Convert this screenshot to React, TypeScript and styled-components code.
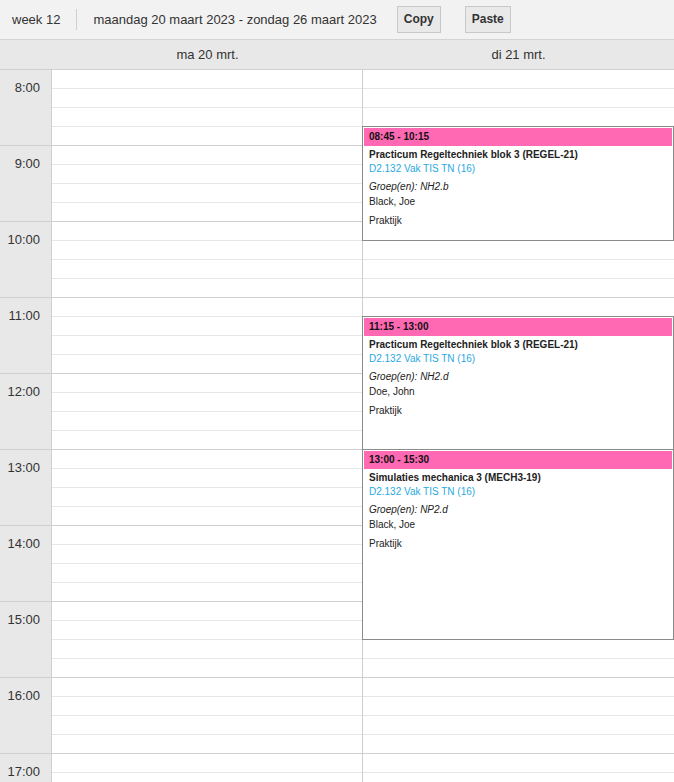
import React from "react";
import styled, { createGlobalStyle } from "styled-components";

const GlobalStyle = createGlobalStyle`
  html, body { margin: 0; padding: 0; background: #fff; }
  body { font-family: "Liberation Sans", Arial, sans-serif; color: #333; }
  * { box-sizing: border-box; }
`;

const HOUR = 76;
const QUARTER = 19;
const START = 8;

const Page = styled.div`
  width: 674px;
  height: 782px;
  overflow: hidden;
  display: flex;
  flex-direction: column;
`;

const Toolbar = styled.div`
  height: 40px;
  flex: none;
  display: flex;
  align-items: center;
  background: #f2f2f2;
  border-bottom: 1px solid #d4d4d4;
  padding: 0 0 1px 12px;
  font-size: 13px;
  color: #333;
`;

const Separator = styled.div`
  width: 1px;
  height: 21px;
  background: #cfcfcf;
  margin: 0 16px 0 16px;
`;

const ToolButton = styled.button<{ $gap: number }>`
  height: 27px;
  margin-left: ${(p) => p.$gap}px;
  padding: 0 6px;
  background: #e9e9e9;
  border: 1px solid #c8c8c8;
  border-radius: 0;
  font-family: "Liberation Sans", Arial, sans-serif;
  font-size: 12px;
  font-weight: bold;
  color: #333;
`;

const HeaderRow = styled.div`
  height: 30px;
  flex: none;
  display: grid;
  grid-template-columns: 52px 311px 311px;
  background: #e8e8e8;
  border-bottom: 1px solid #d0d0d0;
`;

const DayTitle = styled.div`
  display: flex;
  align-items: center;
  justify-content: center;
  font-size: 13px;
  color: #333;
  padding-bottom: 1px;
`;

const Grid = styled.div`
  display: grid;
  grid-template-columns: 52px 311px 311px;
  flex: none;
`;

const TimeColumn = styled.div`
  background: #e8e8e8;
  border-right: 1px solid #cfcfcf;
`;

const TimeCell = styled.div`
  height: ${HOUR}px;
  border-bottom: 1px solid #cfcfcf;
  text-align: right;
  padding: 10px 11px 0 0;
  font-size: 13px;
  line-height: 15px;
  color: #333;
`;

const DayColumn = styled.div<{ $last?: boolean }>`
  position: relative;
  border-right: ${(p) => (p.$last ? "none" : "1px solid #cfcfcf")};
`;

const Slot = styled.div<{ $hourEnd: boolean }>`
  height: ${QUARTER}px;
  border-bottom: 1px solid ${(p) => (p.$hourEnd ? "#cfcfcf" : "#e6e6e6")};
`;

const Event = styled.div`
  position: absolute;
  left: -1px;
  right: 0;
  background: #fff;
  border: 1px solid #8a8a8a;
  padding: 1px;
  font-size: 10px;
  color: #222;
`;

const EventTime = styled.div`
  height: 18px;
  background: #ff69b4;
  font-weight: bold;
  line-height: 18px;
  padding-left: 5px;
  color: #111;
`;

const EventBody = styled.div`
  padding: 2px 0 0 5px;
`;

const Title = styled.div`
  font-weight: bold;
  line-height: 14px;
`;

const Room = styled.div`
  color: #29a9e0;
  line-height: 14px;
`;

const Line = styled.div<{ $top: number; $italic?: boolean }>`
  margin-top: ${(p) => p.$top}px;
  line-height: 14px;
  font-style: ${(p) => (p.$italic ? "italic" : "normal")};
`;

type Ev = {
  start: number;
  end: number;
  time: string;
  title: string;
  room: string;
  group: string;
  teacher: string;
  kind: string;
};

const events: Ev[] = [
  {
    start: 8.75,
    end: 10.25,
    time: "08:45 - 10:15",
    title: "Practicum Regeltechniek blok 3 (REGEL-21)",
    room: "D2.132 Vak TIS TN (16)",
    group: "Groep(en): NH2.b",
    teacher: "Black, Joe",
    kind: "Praktijk",
  },
  {
    start: 11.25,
    end: 13,
    time: "11:15 - 13:00",
    title: "Practicum Regeltechniek blok 3 (REGEL-21)",
    room: "D2.132 Vak TIS TN (16)",
    group: "Groep(en): NH2.d",
    teacher: "Doe, John",
    kind: "Praktijk",
  },
  {
    start: 13,
    end: 15.5,
    time: "13:00 - 15:30",
    title: "Simulaties mechanica 3 (MECH3-19)",
    room: "D2.132 Vak TIS TN (16)",
    group: "Groep(en): NP2.d",
    teacher: "Black, Joe",
    kind: "Praktijk",
  },
];

const hours = [8, 9, 10, 11, 12, 13, 14, 15, 16, 17];

const Slots = () => (
  <>
    {hours.map((h) =>
      [0, 1, 2, 3].map((q) => <Slot key={`${h}-${q}`} $hourEnd={q === 3} />)
    )}
  </>
);

export default function App() {
  return (
    <Page>
      <GlobalStyle />
      <Toolbar>
        <span>week 12</span>
        <Separator />
        <span>maandag 20 maart 2023 - zondag 26 maart 2023</span>
        <ToolButton $gap={20}>Copy</ToolButton>
        <ToolButton $gap={24}>Paste</ToolButton>
      </Toolbar>
      <HeaderRow>
        <div />
        <DayTitle>ma 20 mrt.</DayTitle>
        <DayTitle>di 21 mrt.</DayTitle>
      </HeaderRow>
      <Grid>
        <TimeColumn>
          {hours.map((h) => (
            <TimeCell key={h}>{h}:00</TimeCell>
          ))}
        </TimeColumn>
        <DayColumn>
          <Slots />
        </DayColumn>
        <DayColumn $last>
          <Slots />
          {events.map((e) => (
            <Event
              key={e.time}
              style={{
                top: (e.start - START) * HOUR - 1,
                height: (e.end - e.start) * HOUR + 1,
              }}
            >
              <EventTime>{e.time}</EventTime>
              <EventBody>
                <Title>{e.title}</Title>
                <Room>{e.room}</Room>
                <Line $top={4} $italic>
                  {e.group}
                </Line>
                <Line $top={1}>{e.teacher}</Line>
                <Line $top={5}>{e.kind}</Line>
              </EventBody>
            </Event>
          ))}
        </DayColumn>
      </Grid>
    </Page>
  );
}
